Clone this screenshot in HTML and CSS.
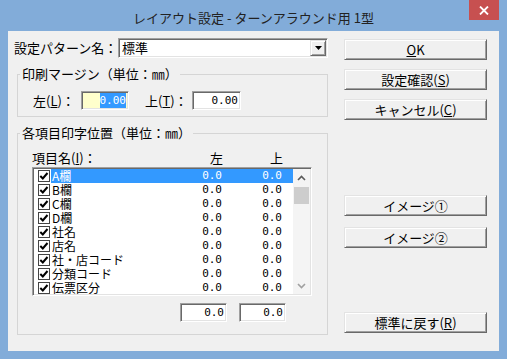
FILE: index.html
```html
<!DOCTYPE html>
<html lang="ja">
<head>
  <meta charset="UTF-8" />
  <title>レイアウト設定 - ターンアラウンド用 1型</title>
  <link rel="stylesheet" href="styles.css">
</head>
<body>
  <div class="titlebar">
    <span class="title">レイアウト設定 - ターンアラウンド用 1型</span>
    <button class="close" type="button">
      <svg width="10" height="9" viewBox="0 0 10 9"><path d="M1 0.5 L9 8.5 M9 0.5 L1 8.5" stroke="#fff" stroke-width="1.8" fill="none"/></svg>
    </button>
  </div>

  <div class="client">
    <div class="main">
      <div class="pattern-row">
        <label>設定パターン名：</label>
        <div class="combo">
          <span>標準</span>
          <span class="drop">
            <svg width="7" height="4" viewBox="0 0 7 4"><path d="M0 0 H7 L3.5 4 Z" fill="#000"/></svg>
          </span>
        </div>
      </div>

      <fieldset class="group margin-group">
        <legend>印刷マージン（単位：㎜）</legend>
        <div class="margin-row">
          <label class="lbl-left">左(<u>L</u>)：</label>
          <span class="edit edit-focus"><span class="sel">0.00</span></span>
          <label class="lbl-top">上(<u>T</u>)：</label>
          <span class="edit edit-wide">0.00</span>
        </div>
      </fieldset>

      <fieldset class="group items-group">
        <legend>各項目印字位置（単位：㎜）</legend>
        <div class="list-head">
          <span>項目名(<u>I</u>)：</span>
          <span class="num-head">左</span>
          <span class="num-head">上</span>
        </div>
        <div class="listbox">
          <div class="rows" id="rows"></div>
          <div class="vscroll">
            <span class="sb-btn">
              <svg width="9" height="6" viewBox="0 0 9 6"><path d="M1 5 L4.5 1.5 L8 5" stroke="#5a5a5a" stroke-width="1.6" fill="none"/></svg>
            </span>
            <span class="sb-thumb"></span>
            <span class="sb-track"></span>
            <span class="sb-btn">
              <svg width="9" height="6" viewBox="0 0 9 6"><path d="M1 1 L4.5 4.5 L8 1" stroke="#a0a0a0" stroke-width="1.6" fill="none"/></svg>
            </span>
          </div>
        </div>
        <div class="edit-row">
          <span class="edit">0.0</span>
          <span class="edit">0.0</span>
        </div>
      </fieldset>
    </div>

    <div class="side">
      <button class="btn" type="button"><u>O</u>K</button>
      <button class="btn" type="button">設定確認(<u>S</u>)</button>
      <button class="btn" type="button">キャンセル(<u>C</u>)</button>
      <button class="btn btn-img1" type="button">イメージ①</button>
      <button class="btn btn-img2" type="button">イメージ②</button>
      <button class="btn btn-reset" type="button">標準に戻す(<u>R</u>)</button>
    </div>
  </div>

  <script>
    const items = ['A欄', 'B欄', 'C欄', 'D欄', '社名', '店名', '社・店コード', '分類コード', '伝票区分'];
    const rows = document.getElementById('rows');

    items.forEach((name, i) => {
      const row = document.createElement('div');
      row.classList.add('row');
      if (i === 0) row.classList.add('selected');
      row.innerHTML = `
        <svg class="chk" width="12" height="12" viewBox="0 0 12 12">
          <rect x="0.5" y="0.5" width="11" height="11" fill="#fff" stroke="#444"/>
          <path d="M2.3 6 L4.8 8.5 L9.5 3" stroke="#000" stroke-width="2" fill="none"/>
        </svg>
        <div class="cell">
          <span class="name">${name}</span>
          <span class="num">0.0</span>
          <span class="num">0.0</span>
        </div>
      `;
      rows.appendChild(row);
    });
  </script>
</body>
</html>
```

FILE: styles.css
```css
* {
  box-sizing: border-box;
}
body {
  margin: 0;
  width: 507px;
  height: 359px;
  overflow: hidden;
  background: #82acd9;
  font-family: "Noto Sans CJK JP", sans-serif;
  font-size: 13px;
  color: #000;
}
u {
  text-decoration: underline;
  text-underline-offset: 1px;
}

/* title bar */
.titlebar {
  height: 31px;
  display: grid;
  grid-template-columns: 1fr auto 1fr;
  align-items: start;
}
.title {
  grid-column: 2;
  padding-top: 10px;
  font-size: 13px;
  line-height: 15px;
  color: #222;
}
.close {
  grid-column: 3;
  justify-self: end;
  width: 30px;
  height: 20px;
  margin-right: 8px;
  padding: 0;
  border: none;
  background: #c75050;
  display: flex;
  align-items: center;
  justify-content: center;
}

/* client area */
.client {
  margin: 0 8px;
  height: 320px;
  background: #f0f0f0;
  display: flex;
  gap: 16px;
  padding: 7px 0 0 6px;
}
.main {
  width: 314px;
}

.pattern-row {
  display: flex;
  align-items: center;
  height: 20px;
}
.pattern-row label {
  width: 104px;
  line-height: 14px;
}
.combo {
  width: 210px;
  height: 20px;
  display: flex;
  align-items: center;
  justify-content: space-between;
  padding: 0 1px 0 3px;
  background: #fff;
  border: 1px solid;
  border-color: #a0a0a0 #fff #fff #a0a0a0;
  box-shadow: inset 1px 1px #696969, inset -1px -1px #e3e3e3;
  line-height: 14px;
}
.drop {
  width: 16px;
  height: 16px;
  display: flex;
  align-items: center;
  justify-content: center;
  background: #f0f0f0;
  border: 1px solid;
  border-color: #e3e3e3 #696969 #696969 #e3e3e3;
  box-shadow: inset 1px 1px #fff, inset -1px -1px #a0a0a0;
}

/* group boxes */
.group {
  margin: 9px 0 0 3px;
  padding: 0 0 0 14px;
  width: 311px;
  min-inline-size: 0;
  border: 1px solid #d5d5d5;
}
.group legend {
  margin-left: -12px;
  padding: 0 2px;
  line-height: 14px;
}
.margin-group {
  padding-bottom: 6px;
}
.items-group {
  padding-bottom: 12px;
}

.edit {
  display: block;
  width: 47px;
  height: 19px;
  padding-right: 2px;
  background: #fff;
  border: 1px solid;
  border-color: #a0a0a0 #fff #fff #a0a0a0;
  box-shadow: inset 1px 1px #696969, inset -1px -1px #e3e3e3;
  font-family: "DejaVu Sans Mono", monospace;
  font-size: 11px;
  line-height: 17px;
  text-align: right;
}
.edit-focus {
  width: 48px;
  background: #ffffcc;
}
.edit-wide {
  width: 49px;
}
.sel {
  background: #3399ff;
  color: #fff;
  padding: 1px 0;
}

.margin-row {
  display: flex;
  align-items: center;
  margin-top: 10px;
  padding-left: 1px;
}
.margin-row label {
  line-height: 14px;
}
.lbl-left {
  width: 48px;
}
.lbl-top {
  width: 47px;
  margin-left: 16px;
}

/* item list */
.list-head {
  display: grid;
  grid-template-columns: 1fr 34px 60px;
  width: 280px;
  height: 16px;
  margin-top: 11px;
  padding-right: 29px;
  line-height: 14px;
}
.num-head {
  text-align: right;
}
.listbox {
  display: flex;
  width: 280px;
  height: 129px;
  background: #fff;
  border: 1px solid;
  border-color: #a0a0a0 #fff #fff #a0a0a0;
  box-shadow: inset 1px 1px #696969, inset -1px -1px #e3e3e3;
  padding: 1px;
}
.rows {
  flex: 1;
}
.row {
  display: flex;
  align-items: center;
  height: 14px;
}
.chk {
  flex: none;
  margin: 0 1px 0 4px;
}
.cell {
  flex: 1;
  align-self: stretch;
  display: grid;
  grid-template-columns: 1fr 34px 60px;
  padding: 0 11px 0 1px;
  font-size: 12px;
  line-height: 14px;
}
.row.selected .cell {
  background: #3399ff;
  color: #fff;
}
.num {
  text-align: right;
  font-family: "DejaVu Sans Mono", monospace;
  font-size: 11px;
}

.vscroll {
  width: 17px;
  display: flex;
  flex-direction: column;
  background: #f4f4f4;
}
.sb-btn {
  height: 17px;
  display: flex;
  align-items: center;
  justify-content: center;
}
.sb-thumb {
  height: 17px;
  margin: 1px 1px 0;
  background: #cdcdcd;
}
.sb-track {
  flex: 1;
}

.edit-row {
  display: flex;
  gap: 12px;
  margin-top: 7px;
  padding-left: 148px;
}

/* buttons */
.side {
  width: 143px;
  display: flex;
  flex-direction: column;
  padding-top: 1px;
}
.btn {
  width: 143px;
  height: 21px;
  margin-bottom: 9px;
  padding: 1px 0 0;
  background: #f0f0f0;
  border: 1px solid;
  border-color: #e3e3e3 #696969 #696969 #e3e3e3;
  box-shadow: inset 1px 1px #fff, inset -1px -1px #a0a0a0;
  font-family: "Noto Sans CJK JP", sans-serif;
  font-size: 13px;
  line-height: 14px;
  color: #000;
}
.btn-img1 {
  margin-top: 66px;
  margin-bottom: 11px;
}
.btn-img2 {
  margin-bottom: 64px;
}
```
